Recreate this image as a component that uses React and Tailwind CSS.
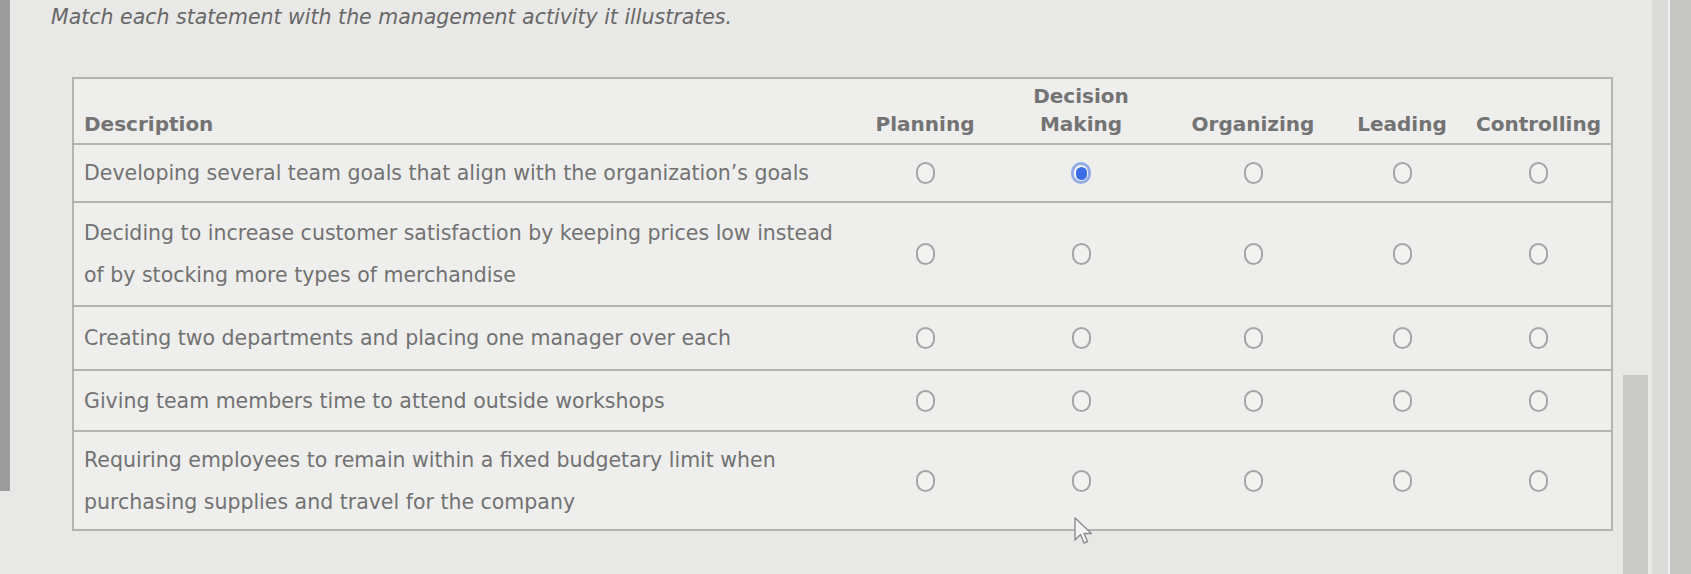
import React from "react";

const columns = ["Planning", "Decision Making", "Organizing", "Leading", "Controlling"];

const rows = [
  { h: "h-[58px]", text: ["Developing several team goals that align with the organization’s goals"], picked: 1 },
  {
    h: "h-[104px]",
    text: [
      "Deciding to increase customer satisfaction by keeping prices low instead",
      "of by stocking more types of merchandise",
    ],
  },
  { h: "h-[64px]", text: ["Creating two departments and placing one manager over each"] },
  { h: "h-[61px]", text: ["Giving team members time to attend outside workshops"] },
  {
    h: "h-[99px]",
    text: [
      "Requiring employees to remain within a fixed budgetary limit when",
      "purchasing supplies and travel for the company",
    ],
  },
];

const grid = "grid grid-cols-[778px_146px_166px_178px_120px_153px]";

function Radio({ checked }) {
  if (checked) {
    return (
      <span className="flex h-[22px] w-[20px] items-center justify-center rounded-full border-[3px] border-[#93ace8] bg-[#f4f6fb]">
        <span className="h-[13px] w-[11px] rounded-full bg-[#3b6ee6]" />
      </span>
    );
  }
  return <span className="h-[22px] w-[19px] rounded-full border-2 border-[#a5a5a5] bg-[#f1f1f0]" />;
}

function Cursor() {
  return (
    <svg className="absolute left-[1073px] top-[516px]" width="22" height="30" viewBox="0 0 22 30">
      <path d="M2 2 L2 24 L7.5 18.5 L11 27 L14.5 25.5 L11 17.5 L18.5 17.5 Z" fill="#f4f4f4" stroke="#8c8c8c" strokeWidth="1.4" strokeLinejoin="round" />
    </svg>
  );
}

export default function App() {
  return (
    <div className="relative flex h-[574px] w-[1691px] overflow-hidden bg-[#e8e8e6] font-['DejaVu_Sans',sans-serif] text-[#727272]">
      <div className="h-[491px] w-[10px] shrink-0 bg-[#9c9c9c]" />
      <div className="flex-1">
        <p className="ml-[41px] pt-[5px] text-[20.5px] italic leading-[24px] text-[#676767]">
          Match each statement with the management activity it illustrates.
        </p>
        <div className="ml-[62px] mt-[48px] w-[1541px] border-2 border-[#b3b3b2] bg-[#eeeeed]">
          <div className={`${grid} h-[64px] items-end pb-[5px] text-[20px] font-bold leading-[28px] text-[#737373]`}>
            <div className="pl-[10px]">Description</div>
            {columns.map((c) => (
              <div key={c} className="text-center">
                {c === "Decision Making" ? (
                  <>
                    Decision
                    <br />
                    Making
                  </>
                ) : (
                  c
                )}
              </div>
            ))}
          </div>
          {rows.map((r, i) => (
            <div key={i} className={`${grid} ${r.h} items-center border-t-2 border-[#b3b3b2] text-[20.5px] leading-[42px]`}>
              <div className="pl-[10px]">
                {r.text.map((t) => (
                  <div key={t}>{t}</div>
                ))}
              </div>
              {columns.map((c, j) => (
                <div key={c} className="flex items-center justify-center">
                  <Radio checked={r.picked === j} />
                </div>
              ))}
            </div>
          ))}
        </div>
      </div>
      <div className="flex w-[32px] shrink-0 flex-col pt-[375px]">
        <div className="ml-[3px] h-full w-[25px] bg-[#c9c9c8]" />
      </div>
      <div className="w-[16px] shrink-0 bg-[#dadad9]" />
      <div className="w-[2px] shrink-0 bg-[#f2f2f2]" />
      <div className="w-[21px] shrink-0 bg-[#c6c6c5]" />
      <Cursor />
    </div>
  );
}
